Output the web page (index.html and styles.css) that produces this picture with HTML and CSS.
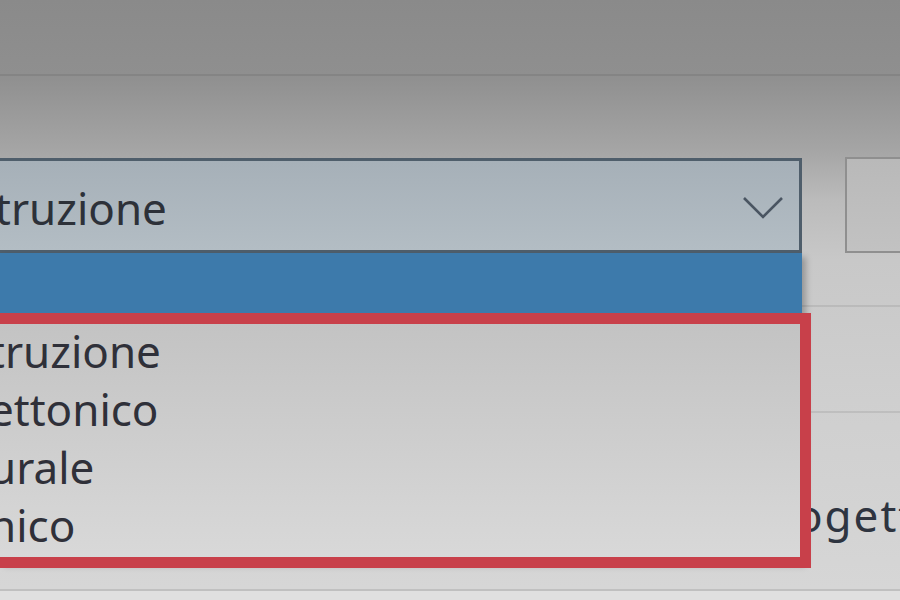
FILE: index.html
```html
<!DOCTYPE html>
<html lang="it">
<head>
<meta charset="utf-8">
<title>Fase</title>
<link rel="stylesheet" href="styles.css">
</head>
<body>
<div class="window">
  <div class="header"></div>
  <div class="section section-top">
    <div class="row">
      <div class="combo">
        <span class="combo-text">truzione</span>
        <svg class="chevron" width="42" height="24" viewBox="0 0 42 24"><polyline points="2,2 21,21 40,2" fill="none" stroke="#4a5562" stroke-width="2.6"/></svg>
      </div>
      <div class="btn"></div>
    </div>
  </div>
  <div class="section section-mid"></div>
  <div class="section section-label">
    <span class="label">Progetto</span>
  </div>
  <div class="footer"></div>

  <div class="popup">
    <div class="opt-selected"></div>
    <div class="opts">
      <div class="opt">truzione</div>
      <div class="opt">ettonico</div>
      <div class="opt">urale</div>
      <div class="opt">nico</div>
    </div>
  </div>
  <div class="annotation"></div>
</div>
</body>
</html>
```

FILE: styles.css
```css
html, body {
  margin: 0;
  padding: 0;
  width: 900px;
  height: 600px;
  overflow: hidden;
}

body {
  font-family: "Noto Sans", "Open Sans", "DejaVu Sans", sans-serif;
  background: linear-gradient(to bottom,
    #8a8a8a 0px, #8f8f8f 75px, #a5a5a5 150px, #bbbbbb 200px,
    #c8c8c8 260px, #cfcfcf 400px, #d6d6d6 588px);
  color: #2e323a;
}

.window {
  position: relative;
  width: 900px;
  height: 600px;
  display: flex;
  flex-direction: column;
}

.header {
  height: 74px;
  border-bottom: 2px solid rgba(0, 0, 0, 0.07);
}

.section {
  border-bottom: 2px solid rgba(0, 0, 0, 0.08);
}

.section-top {
  padding: 82px 0 52px 0;
}

.row {
  display: flex;
  gap: 43px;
  align-items: flex-start;
}

.combo {
  box-sizing: border-box;
  flex: 0 0 802px;
  height: 95px;
  border: 3px solid #4f5e6b;
  border-left: none;
  background: linear-gradient(to bottom, #a6b0b8, #b3bdc4);
  display: flex;
  align-items: center;
  justify-content: space-between;
  padding: 5px 15px 0 0;
}

.combo-text {
  font-size: 44px;
  line-height: 60px;
  margin-left: -5px;
  color: #2d3139;
}

.chevron {
  display: block;
}

.btn {
  box-sizing: border-box;
  flex: 0 0 120px;
  height: 96px;
  margin-top: -1px;
  border: 2px solid #8f8f8f;
  border-right: none;
  background: linear-gradient(to bottom, #b9b9b9, #c2c2c2);
}

.section-mid {
  height: 104px;
}

.section-label {
  height: 104px;
  padding: 72px 0 0 748px;
  border-bottom: 2px solid #c0c0c0;
}

.label {
  display: block;
  font-size: 44px;
  line-height: 60px;
  letter-spacing: 2px;
  white-space: nowrap;
  color: #2e3440;
}

.footer {
  flex: 1;
  background: #e0e0e0;
}

.popup {
  position: absolute;
  top: 253px;
  left: 0;
  width: 802px;
  box-shadow: 4px 4px 6px rgba(0, 0, 0, 0.25);
  background: linear-gradient(to bottom, #c3c3c3 70px, #d9d9d9 310px);
}

.opt-selected {
  height: 60px;
  background: #3d7aab;
}

.opts {
  padding: 9px 0 8px 0;
}

.opt {
  font-size: 44px;
  line-height: 58px;
  height: 58px;
  margin-left: -11px;
  white-space: nowrap;
  color: #2f3039;
}

.annotation {
  position: absolute;
  top: 313px;
  left: -20px;
  width: 831px;
  height: 255px;
  box-sizing: border-box;
  border: 11px solid #c8404a;
}
```
